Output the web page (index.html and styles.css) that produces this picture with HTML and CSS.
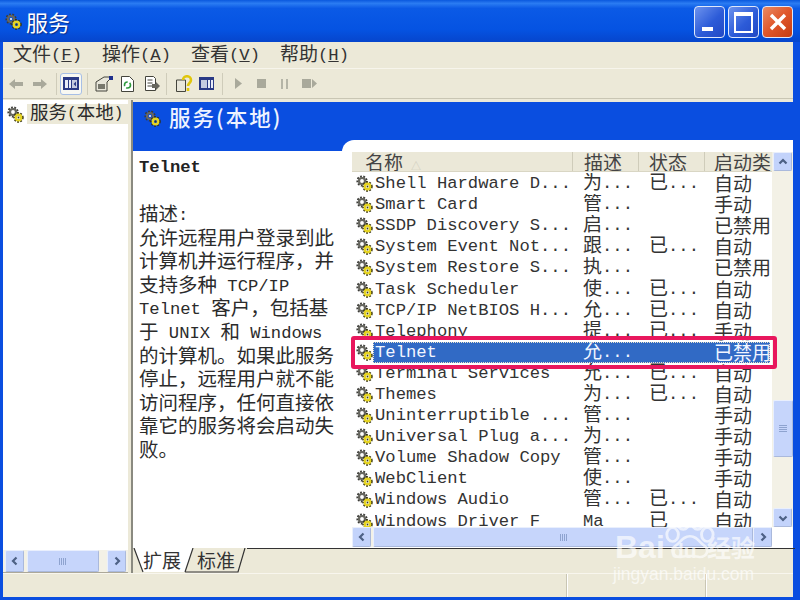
FILE: index.html
```html
<!DOCTYPE html>
<html lang="zh-CN">

<head>
    <meta charset="UTF-8">
    <title>服务</title>
    <link rel="stylesheet" href="styles.css">
</head>

<body>
<svg class="defs" width="0" height="0">
    <symbol id="gear" viewBox="0 0 17 17">
        <circle cx="6" cy="6" r="4.6" fill="none" stroke="#3c3c38" stroke-width="2" stroke-dasharray="1.8 1.4"/>
        <circle cx="6" cy="6" r="3" fill="none" stroke="#66665f" stroke-width="2.2"/>
        <circle cx="6" cy="6" r="1" fill="#fff"/>
        <circle cx="11.5" cy="11.5" r="4.2" fill="none" stroke="#2f2c0c" stroke-width="2" stroke-dasharray="1.7 1.3"/>
        <circle cx="11.5" cy="11.5" r="2.7" fill="none" stroke="#e6d422" stroke-width="2.4"/>
        <circle cx="11.5" cy="11.5" r="0.9" fill="#3d3a10"/>
    </symbol>
    <symbol id="arrow-left" viewBox="0 0 10 10"><path d="M6.5 1.5 3 5l3.5 3.5" fill="none" stroke="#4d6185" stroke-width="2.2"/></symbol>
    <symbol id="arrow-right" viewBox="0 0 10 10"><path d="M3.5 1.5 7 5 3.5 8.5" fill="none" stroke="#4d6185" stroke-width="2.2"/></symbol>
    <symbol id="arrow-up" viewBox="0 0 10 10"><path d="M1.5 6.5 5 3l3.5 3.5" fill="none" stroke="#4d6185" stroke-width="2.2"/></symbol>
    <symbol id="arrow-down" viewBox="0 0 10 10"><path d="M1.5 3.5 5 7l3.5-3.5" fill="none" stroke="#4d6185" stroke-width="2.2"/></symbol>
</svg>

<div class="window">
    <!-- Title bar -->
    <div class="titlebar">
        <svg class="title-icon"><use href="#gear"/></svg>
        <span class="title-text">服务</span>
        <div class="caption-btns">
            <div class="cap-btn"><span class="cap-min"></span></div>
            <div class="cap-btn"><span class="cap-max"></span></div>
            <div class="cap-btn cap-close">
                <svg width="20" height="20" viewBox="0 0 20 20"><path d="M3 3l14 14M17 3 3 17" stroke="#fff" stroke-width="3.4"/></svg>
            </div>
        </div>
    </div>

    <div class="client">
        <!-- Menu -->
        <div class="menubar">
            <span class="menu-item"><span class="zh">文件</span>(<u>F</u>)</span>
            <span class="menu-item"><span class="zh">操作</span>(<u>A</u>)</span>
            <span class="menu-item"><span class="zh">查看</span>(<u>V</u>)</span>
            <span class="menu-item"><span class="zh">帮助</span>(<u>H</u>)</span>
        </div>

        <!-- Toolbar -->
        <div class="toolbar">
            <svg class="tool" width="14" height="12" viewBox="0 0 14 12"><path d="M0 6l6-5v3h8v4H6v3z" fill="#a9a99b"/></svg>
            <svg class="tool tool-fwd" width="14" height="12" viewBox="0 0 14 12"><path d="M14 6 8 1v3H0v4h8v3z" fill="#a9a99b"/></svg>
            <span class="tool-sep"></span>
            <span class="tool-active">
                <svg width="16" height="13" viewBox="0 0 16 13"><rect width="16" height="13" fill="#2a3a86"/><rect x="2" y="3" width="3" height="8" fill="#e8ecf8"/><rect x="6" y="3" width="2" height="8" fill="#e8ecf8"/><rect x="9" y="3" width="5" height="8" fill="#c5cbe0"/><path d="M13 4.500v5L10.500 7z" fill="#2a3a86"/></svg>
            </span>
            <span class="tool-sep tool-sep-a"></span>
            <svg class="tool tool-props" width="18" height="16" viewBox="0 0 18 16"><path d="M1 6 9 1h6v2L12 6v9H1z" fill="#e8e6da" stroke="#44443c"/><rect x="3" y="8" width="7" height="5" fill="#77776c"/><rect x="14" y="0" width="4" height="4" fill="#1f2f8c"/></svg>
            <svg class="tool tool-refresh" width="13" height="16" viewBox="0 0 13 16"><path d="M.5.5h8l4 4v11H.5z" fill="#fff" stroke="#44443c"/><circle cx="6.500" cy="9" r="3" fill="none" stroke="#2f9a3c" stroke-width="1.600" stroke-dasharray="6 2"/></svg>
            <svg class="tool tool-export" width="15" height="16" viewBox="0 0 15 16"><path d="M.5.5h8l2 2v12H.5z" fill="#fff" stroke="#44443c"/><path d="M2.500 4h5M2.500 7h5M2.500 10h5" stroke="#44443c"/><path d="M7 8h4V6l4 4-4 4v-2H7z" fill="#66665e"/></svg>
            <span class="tool-sep tool-sep-b"></span>
            <svg class="tool" width="17" height="17" viewBox="0 0 17 17"><path d="M.5 5h9v11.500h-9z" fill="#e8e6da" stroke="#44443c"/><path d="M7 5c0-5 8-5 8 0 0 3-3 3-3 6" fill="none" stroke="#e0c60c" stroke-width="2.600"/><rect x="10.700" y="13" width="2.600" height="3" fill="#e0c60c"/></svg>
            <svg class="tool tool-view" width="15" height="13" viewBox="0 0 15 13"><rect width="15" height="13" fill="#2a3a86"/><rect x="2" y="3" width="6" height="8" fill="#c5cbe0"/><rect x="9" y="3" width="2" height="8" fill="#e8ecf8"/><rect x="12" y="3" width="2" height="8" fill="#e8ecf8"/></svg>
            <span class="tool-sep tool-sep-c"></span>
            <svg class="tool tool-play" width="7" height="11" viewBox="0 0 7 11"><path d="M0 0l7 5.500L0 11z" fill="#a9a99b"/></svg>
            <span class="tool tool-stop"></span>
            <span class="tool tool-pause"></span>
            <svg class="tool tool-restart" width="15" height="9" viewBox="0 0 15 9"><rect width="9" height="9" fill="#a9a99b"/><path d="M10 0l5 4.500L10 9z" fill="#a9a99b"/></svg>
        </div>

        <div class="panes">
            <!-- Tree -->
            <div class="tree-pane">
                <div class="tree-body">
                    <div class="tree-row">
                        <svg class="gear"><use href="#gear"/></svg>
                        <span class="tree-label"><span class="zh">服务</span>(<span class="zh">本地</span>)</span>
                    </div>
                </div>
                <div class="hscroll tree-scroll">
                    <div class="sb-btn"><svg><use href="#arrow-left"/></svg></div>
                    <div class="sb-thumb"><span class="grip-v"></span></div>
                    <div class="sb-btn"><svg><use href="#arrow-right"/></svg></div>
                </div>
            </div>

            <div class="right-pane">
                <div class="banner">
                    <svg class="gear"><use href="#gear"/></svg>
                    <span class="banner-text">服务(本地)</span>
                </div>
                <div class="detail">
                    <div class="desc">
                        <div class="desc-name">Telnet</div>
                        <p class="desc-text"><span class="zh">描述</span>:<br>
                        <span class="zh">允许远程用户登录到此</span><br>
                        <span class="zh">计算机并运行程序&#65292;并</span><br>
                        <span class="zh">支持多种</span> TCP/IP<br>
                        Telnet <span class="zh">客户&#65292;包括基</span><br>
                        <span class="zh">于</span> UNIX <span class="zh">和</span> Windows<br>
                        <span class="zh">的计算机。如果此服务</span><br>
                        <span class="zh">停止&#65292;远程用户就不能</span><br>
                        <span class="zh">访问程序&#65292;任何直接依</span><br>
                        <span class="zh">靠它的服务将会启动失</span><br>
                        <span class="zh">败。</span></p>
                    </div>
                    <div class="list-panel">
                        <div class="list">
                            <div class="list-head">
                                <span class="hd hd-name zh">名称<i class="sort">△</i></span>
                                <span class="hd hd-desc zh">描述</span>
                                <span class="hd hd-status zh">状态</span>
                                <span class="hd hd-type zh">启动类</span>
                            </div>
                            <div class="rows">
                                <div class="row"><svg class="gear"><use href="#gear"/></svg><div class="cells"><span>Shell Hardware D...</span><span><span class="zh">为</span>...</span><span><span class="zh">已</span>...</span><span class="zh">自动</span></div></div>
                                <div class="row"><svg class="gear"><use href="#gear"/></svg><div class="cells"><span>Smart Card</span><span><span class="zh">管</span>...</span><span></span><span class="zh">手动</span></div></div>
                                <div class="row"><svg class="gear"><use href="#gear"/></svg><div class="cells"><span>SSDP Discovery S...</span><span><span class="zh">启</span>...</span><span></span><span class="zh">已禁用</span></div></div>
                                <div class="row"><svg class="gear"><use href="#gear"/></svg><div class="cells"><span>System Event Not...</span><span><span class="zh">跟</span>...</span><span><span class="zh">已</span>...</span><span class="zh">自动</span></div></div>
                                <div class="row"><svg class="gear"><use href="#gear"/></svg><div class="cells"><span>System Restore S...</span><span><span class="zh">执</span>...</span><span></span><span class="zh">已禁用</span></div></div>
                                <div class="row"><svg class="gear"><use href="#gear"/></svg><div class="cells"><span>Task Scheduler</span><span><span class="zh">使</span>...</span><span><span class="zh">已</span>...</span><span class="zh">自动</span></div></div>
                                <div class="row"><svg class="gear"><use href="#gear"/></svg><div class="cells"><span>TCP/IP NetBIOS H...</span><span><span class="zh">允</span>...</span><span><span class="zh">已</span>...</span><span class="zh">自动</span></div></div>
                                <div class="row"><svg class="gear"><use href="#gear"/></svg><div class="cells"><span>Telephony</span><span><span class="zh">提</span>...</span><span><span class="zh">已</span>...</span><span class="zh">手动</span></div></div>
                                <div class="row row-selected"><svg class="gear"><use href="#gear"/></svg><div class="cells"><span>Telnet</span><span><span class="zh">允</span>...</span><span></span><span class="zh">已禁用</span></div></div>
                                <div class="row"><svg class="gear"><use href="#gear"/></svg><div class="cells"><span>Terminal Services</span><span><span class="zh">允</span>...</span><span><span class="zh">已</span>...</span><span class="zh">自动</span></div></div>
                                <div class="row"><svg class="gear"><use href="#gear"/></svg><div class="cells"><span>Themes</span><span><span class="zh">为</span>...</span><span><span class="zh">已</span>...</span><span class="zh">自动</span></div></div>
                                <div class="row"><svg class="gear"><use href="#gear"/></svg><div class="cells"><span>Uninterruptible ...</span><span><span class="zh">管</span>...</span><span></span><span class="zh">手动</span></div></div>
                                <div class="row"><svg class="gear"><use href="#gear"/></svg><div class="cells"><span>Universal Plug a...</span><span><span class="zh">为</span>...</span><span></span><span class="zh">手动</span></div></div>
                                <div class="row"><svg class="gear"><use href="#gear"/></svg><div class="cells"><span>Volume Shadow Copy</span><span><span class="zh">管</span>...</span><span></span><span class="zh">手动</span></div></div>
                                <div class="row"><svg class="gear"><use href="#gear"/></svg><div class="cells"><span>WebClient</span><span><span class="zh">使</span>...</span><span></span><span class="zh">手动</span></div></div>
                                <div class="row"><svg class="gear"><use href="#gear"/></svg><div class="cells"><span>Windows Audio</span><span><span class="zh">管</span>...</span><span><span class="zh">已</span>...</span><span class="zh">自动</span></div></div>
                                <div class="row"><svg class="gear"><use href="#gear"/></svg><div class="cells"><span>Windows Driver F</span><span>Ma</span><span><span class="zh">已</span></span><span class="zh">自动</span></div></div>
                            </div>
                        </div>
                        <div class="vscroll">
                            <div class="sb-btn"><svg><use href="#arrow-up"/></svg></div>
                            <div class="sb-track">
                                <div class="sb-thumb"><span class="grip-h"></span></div>
                            </div>
                            <div class="sb-btn"><svg><use href="#arrow-down"/></svg></div>
                        </div>
                        <div class="hscroll list-scroll">
                            <div class="sb-btn"><svg><use href="#arrow-left"/></svg></div>
                            <div class="sb-thumb"><span class="grip-v"></span></div>
                            <div class="sb-btn"><svg><use href="#arrow-right"/></svg></div>
                        </div>
                    </div>
                </div>
                <!-- Tabs -->
                <div class="tabs">
                    <svg class="tab-shape" width="662" height="25" viewBox="0 0 662 25">
                        <path d="M114 .5H662" stroke="#333"/>
                        <path d="M1 0 10 24H52L60 0z" fill="#fff"/>
                        <path d="M1 0 10 24M52 24 60 0M112 0 105 24H55L52 24" fill="none" stroke="#333" stroke-width="1.200"/>
                    </svg>
                    <span class="tab tab-on zh">扩展</span>
                    <span class="tab zh">标准</span>
                </div>
            </div>
        </div>

        <!-- Status bar -->
        <div class="statusbar">
            <span class="status-cell status-a"></span>
            <span class="status-cell status-b"></span>
            <span class="status-cell"></span>
        </div>
    </div>

    <!-- Highlight drawn on the screenshot -->
    <div class="highlight"></div>

    <!-- Watermark -->
    <div class="watermark">
        <div class="wm-logo">
            <span class="wm-bai">Bai</span>
            <svg class="wm-paw" width="54" height="48" viewBox="0 0 56 56" preserveAspectRatio="none">
                <ellipse cx="11" cy="24" rx="6" ry="8" fill="none" stroke="#fff" stroke-width="3"/>
                <ellipse cx="22" cy="10" rx="6" ry="8" fill="none" stroke="#fff" stroke-width="3"/>
                <ellipse cx="37" cy="10" rx="6" ry="8" fill="none" stroke="#fff" stroke-width="3"/>
                <ellipse cx="47" cy="24" rx="6" ry="8" fill="none" stroke="#fff" stroke-width="3"/>
                <path d="M29 26c-8 0-9 7-15 11-6 5-2 14 6 13 5-1 13-1 18 0 8 1 12-8 6-13-6-4-7-11-15-11z" fill="none" stroke="#fff" stroke-width="3"/>
            </svg>
            <span class="wm-du">du</span>
            <span class="wm-jy">经验</span>
        </div>
        <div class="wm-url">jingyan.baidu.com</div>
    </div>
</div>
</body>

</html>
```

FILE: styles.css
```css
/* page */
body {
    margin: 0;
    font-family: "Liberation Mono", "Noto Sans CJK SC", monospace;
    font-size: 17.2px;
    color: #2b2b2b;
}

.defs {
    position: absolute;
}

.zh {
    font-family: "Noto Sans CJK SC", sans-serif;
    font-size: 19px;
    font-weight: 400;
    line-height: 0;
    vertical-align: -1px;
}

.window {
    position: relative;
    width: 800px;
    height: 600px;
    overflow: hidden;
    display: flex;
    flex-direction: column;
    background-color: #0a4ee0;
}

/* title bar */
.titlebar {
    height: 42px;
    flex: none;
    display: flex;
    align-items: center;
    padding: 0 7px 0 5px;
    background: linear-gradient(#0a58de 0%, #2b7cf2 8%, #0b5ae6 20%, #0553e2 70%, #0645cc 100%);
}

.title-icon {
    width: 17px;
    height: 17px;
    margin-right: 4px;
}

.title-text {
    font-family: "Noto Sans CJK SC", sans-serif;
    font-size: 22px;
    color: #fff;
    text-shadow: 1px 1px 1px #0a2f8c;
}

.caption-btns {
    margin-left: auto;
    padding-top: 2px;
    display: flex;
    gap: 3px;
}

.cap-btn {
    width: 29px;
    height: 30px;
    border: 1px solid #dfe8fb;
    border-radius: 4px;
    background: linear-gradient(135deg, #6d93ee, #2c5bd8 55%, #2248c4);
    display: flex;
    align-items: center;
    justify-content: center;
    position: relative;
}

.cap-close {
    background: linear-gradient(135deg, #e98a63, #e0562a 50%, #c63c12);
}

.cap-min {
    position: absolute;
    left: 7px;
    bottom: 6px;
    width: 11px;
    height: 4px;
    background-color: #fff;
}

.cap-max {
    width: 15px;
    height: 15px;
    border: 2px solid #fff;
    border-top-width: 4px;
}

/* window body */
.client {
    flex: 1;
    min-height: 0;
    display: flex;
    flex-direction: column;
    margin: 0 7px 3px 3px;
    background-color: #ece9d8;
}

.menubar {
    height: 26px;
    flex: none;
    display: flex;
    align-items: center;
    padding-left: 10px;
    border-bottom: 1px solid #f7f5ec;
}

.menu-item {
    width: 89px;
    color: #333;
    white-space: nowrap;
}

.toolbar {
    height: 30px;
    flex: none;
    display: flex;
    align-items: center;
    padding-left: 6px;
    border-bottom: 1px solid #c9c6b4;
    box-sizing: border-box;
}

.tool {
    flex: none;
}

.tool-fwd {
    margin-left: 10px;
}

.tool-sep {
    width: 1px;
    height: 22px;
    margin: 0 3px 0 9px;
    background-color: #cfccba;
}

.tool-sep-a {
    margin: 0 5px;
}

.tool-sep-b {
    margin: 0 9px 0 6px;
}

.tool-sep-c {
    margin: 0 12px 0 8px;
}

.tool-active {
    width: 20px;
    height: 20px;
    display: flex;
    align-items: center;
    justify-content: center;
    background-color: #f8f8f2;
    border: 1px solid #a7bfe6;
    border-radius: 3px;
}

.tool-props {
    margin-left: 2px;
}

.tool-refresh {
    margin-left: 8px;
}

.tool-export {
    margin-left: 11px;
}

.tool-view {
    margin-left: 6px;
}

.tool-stop {
    width: 9px;
    height: 9px;
    margin-left: 15px;
    background-color: #a9a99b;
}

.tool-pause {
    width: 3px;
    height: 10px;
    margin-left: 15px;
    border-left: 2px solid #b5b5a7;
    border-right: 2px solid #b5b5a7;
}

.tool-restart {
    margin-left: 14px;
}

/* panes */
.panes {
    flex: 1;
    min-height: 0;
    display: flex;
}

.tree-pane {
    width: 125px;
    flex: none;
    margin-top: 1px;
    display: flex;
    flex-direction: column;
    background-color: #fff;
    border-bottom: 1px solid #aca899;
}

.tree-body {
    flex: 1;
    padding-top: 4px;
}

.tree-row {
    display: flex;
    align-items: center;
    gap: 3px;
    padding-left: 4px;
}

.tree-label {
    flex: 1;
    height: 20px;
    line-height: 20px;
    padding-left: 3px;
    background-color: #ece9d8;
    white-space: nowrap;
    font-size: 16px;
}

.tree-label .zh {
    font-size: 18.5px;
}

.gear {
    width: 17px;
    height: 17px;
    flex: none;
}

.right-pane {
    flex: 1;
    min-width: 0;
    margin-left: 3px;
    margin-top: 1px;
    display: flex;
    flex-direction: column;
    border-left: 2px solid #8a8a80;
}

.banner {
    height: 49px;
    flex: none;
    box-sizing: border-box;
    margin-top: 2px;
    padding: 7px 0 0 11px;
    display: flex;
    align-items: flex-start;
    background-color: #0a4ee0;
    color: #fff;
}

.banner .gear {
    margin-top: 1px;
}

.banner-text {
    font-family: "Noto Sans CJK SC", sans-serif;
    font-size: 21.5px;
    font-weight: 500;
    line-height: 22px;
    letter-spacing: 2px;
    margin-left: 8px;
    margin-top: -3px;
    color: #eef3ff;
}

.detail {
    flex: 1;
    min-height: 0;
    display: flex;
    background-color: #fff;
}

.desc {
    width: 209px;
    flex: none;
    box-sizing: border-box;
    padding: 5px 0 0 6px;
}

.desc-name {
    font-weight: bold;
    height: 24px;
    line-height: 24px;
    color: #222;
}

.desc-text {
    margin: 24px 0 0;
    line-height: 23.6px;
    white-space: nowrap;
}

.desc-text .zh {
    font-size: 19.5px;
}

/* service list */
.list-panel {
    flex: 1;
    min-width: 0;
    margin-top: -11px;
    box-sizing: border-box;
    padding: 12px 0 2px 10px;
    background-color: #fff;
    border-top-left-radius: 12px;
    display: grid;
    grid-template-columns: 420px 21px;
    grid-template-rows: 375px 20px;
}

.list {
    overflow: hidden;
    display: flex;
    flex-direction: column;
}

.list-head {
    height: 20px;
    flex: none;
    position: relative;
    display: grid;
    grid-template-columns: 221px 66px 66px 1fr;
    background-color: #ebe8d8;
    border-bottom: 1px solid #d9d6c4;
    box-sizing: border-box;
}

.hd {
    line-height: 19px;
    padding-left: 13px;
    white-space: nowrap;
    overflow: hidden;
    color: #444;
    border-right: 1px solid #cfccba;
}

.hd-desc {
    padding-left: 11px;
}

.hd-status {
    padding-left: 10px;
}

.hd-type {
    padding-left: 9px;
    border-right: none;
}

.sort {
    font-style: normal;
    font-size: 10px;
    color: #cfcdbd;
    margin-left: 8px;
}

.rows {
    flex: 1;
    min-height: 0;
    padding-top: 1px;
}

.row {
    height: 21.1px;
    display: flex;
    align-items: center;
    padding-left: 4px;
}

.cells {
    flex: 1;
    height: 21px;
    line-height: 21px;
    margin: 0 2px 0 0;
    padding-left: 2px;
    display: grid;
    grid-template-columns: 208px 66px 65px 1fr;
    white-space: nowrap;
    color: #333;
}

.cells > span {
    overflow: hidden;
}

.cells > .zh {
    line-height: 20px;
}

.row-selected .cells {
    background-color: #316ac5;
    color: #f2f6ff;
    outline: 1px dotted #e8e2c8;
    outline-offset: -1px;
}

/* scroll bars */
.sb-btn {
    width: 19px;
    height: 19px;
    flex: none;
    display: flex;
    align-items: center;
    justify-content: center;
    background-color: #c3d3fb;
    border: 1px solid #e9effd;
    border-right-color: #aab9dc;
    border-bottom-color: #aab9dc;
    border-radius: 2px;
    box-sizing: border-box;
}

.sb-btn svg {
    width: 10px;
    height: 10px;
}

.sb-thumb {
    display: flex;
    align-items: center;
    justify-content: center;
    background-color: #c6d5fb;
    border: 1px solid #e9effd;
    border-right-color: #aab9dc;
    border-bottom-color: #aab9dc;
    border-radius: 2px;
    box-sizing: border-box;
}

.grip-v {
    width: 7px;
    height: 7px;
    background: repeating-linear-gradient(90deg, #8ea3cf 0 1px, transparent 1px 2px);
}

.grip-h {
    width: 8px;
    height: 7px;
    background: repeating-linear-gradient(#8ea3cf 0 1px, transparent 1px 2px);
}

.hscroll {
    display: flex;
    align-items: stretch;
    background-color: #f3f1e6;
}

.hscroll .sb-btn {
    height: auto;
}

.tree-scroll {
    height: 22px;
    flex: none;
    padding: 0 2px;
    justify-content: space-between;
}

.tree-scroll .sb-thumb {
    width: 72px;
    margin-right: 6px;
}

.list-scroll {
    height: 20px;
    grid-column: 1;
    grid-row: 2;
}

.list-scroll .sb-thumb {
    flex: 1;
    margin-left: 2px;
}

.vscroll {
    grid-column: 2;
    grid-row: 1;
    display: flex;
    flex-direction: column;
    background-color: #f3f1e6;
    padding-left: 1px;
}

.sb-track {
    flex: 1;
    padding-top: 229px;
}

.sb-track .sb-thumb {
    height: 57px;
}

/* tabs */
.tabs {
    height: 25px;
    flex: none;
    position: relative;
    display: flex;
    padding-left: 10px;
    background-color: #ece9d8;
}

.tab-shape {
    position: absolute;
    left: 0;
    top: 0;
}

.tab {
    position: relative;
    width: 54px;
    line-height: 24px;
    color: #333;
}

/* status bar */
.statusbar {
    height: 23px;
    flex: none;
    display: flex;
    border-top: 1px solid #f8f6ee;
}

.status-cell {
    flex: 1;
    border-left: 1px solid #fff;
    box-shadow: -1px 0 0 #c9c6b4;
}

.status-a {
    flex: none;
    width: 564px;
    border-left: none;
    box-shadow: none;
}

.status-b {
    flex: none;
    width: 138px;
}

/* red box over the Telnet row */
.highlight {
    position: absolute;
    left: 351px;
    top: 336px;
    width: 418px;
    height: 25px;
    border: 4px solid #e8175d;
    border-radius: 3px;
}

/* watermark */
.watermark {
    position: absolute;
    left: 613px;
    top: 514px;
    width: 150px;
    color: #fff;
    opacity: 0.65;
}

.wm-logo {
    position: relative;
    height: 54px;
}

.wm-bai {
    position: absolute;
    left: 2px;
    top: 13px;
    font-family: "Liberation Sans", sans-serif;
    font-weight: bold;
    font-size: 32px;
    line-height: 40px;
}

.wm-paw {
    position: absolute;
    left: 49px;
    top: 0;
}

.wm-du {
    position: absolute;
    left: 58px;
    top: 25px;
    font-family: "Liberation Sans", sans-serif;
    font-weight: bold;
    font-size: 21px;
    line-height: 24px;
}

.wm-jy {
    position: absolute;
    left: 94px;
    top: 17px;
    font-family: "Noto Sans CJK SC", sans-serif;
    font-size: 24px;
    font-weight: 700;
    line-height: 32px;
}

.wm-url {
    font-family: "Liberation Sans", sans-serif;
    font-size: 17.5px;
    line-height: 20px;
    margin-top: -4px;
}
```
